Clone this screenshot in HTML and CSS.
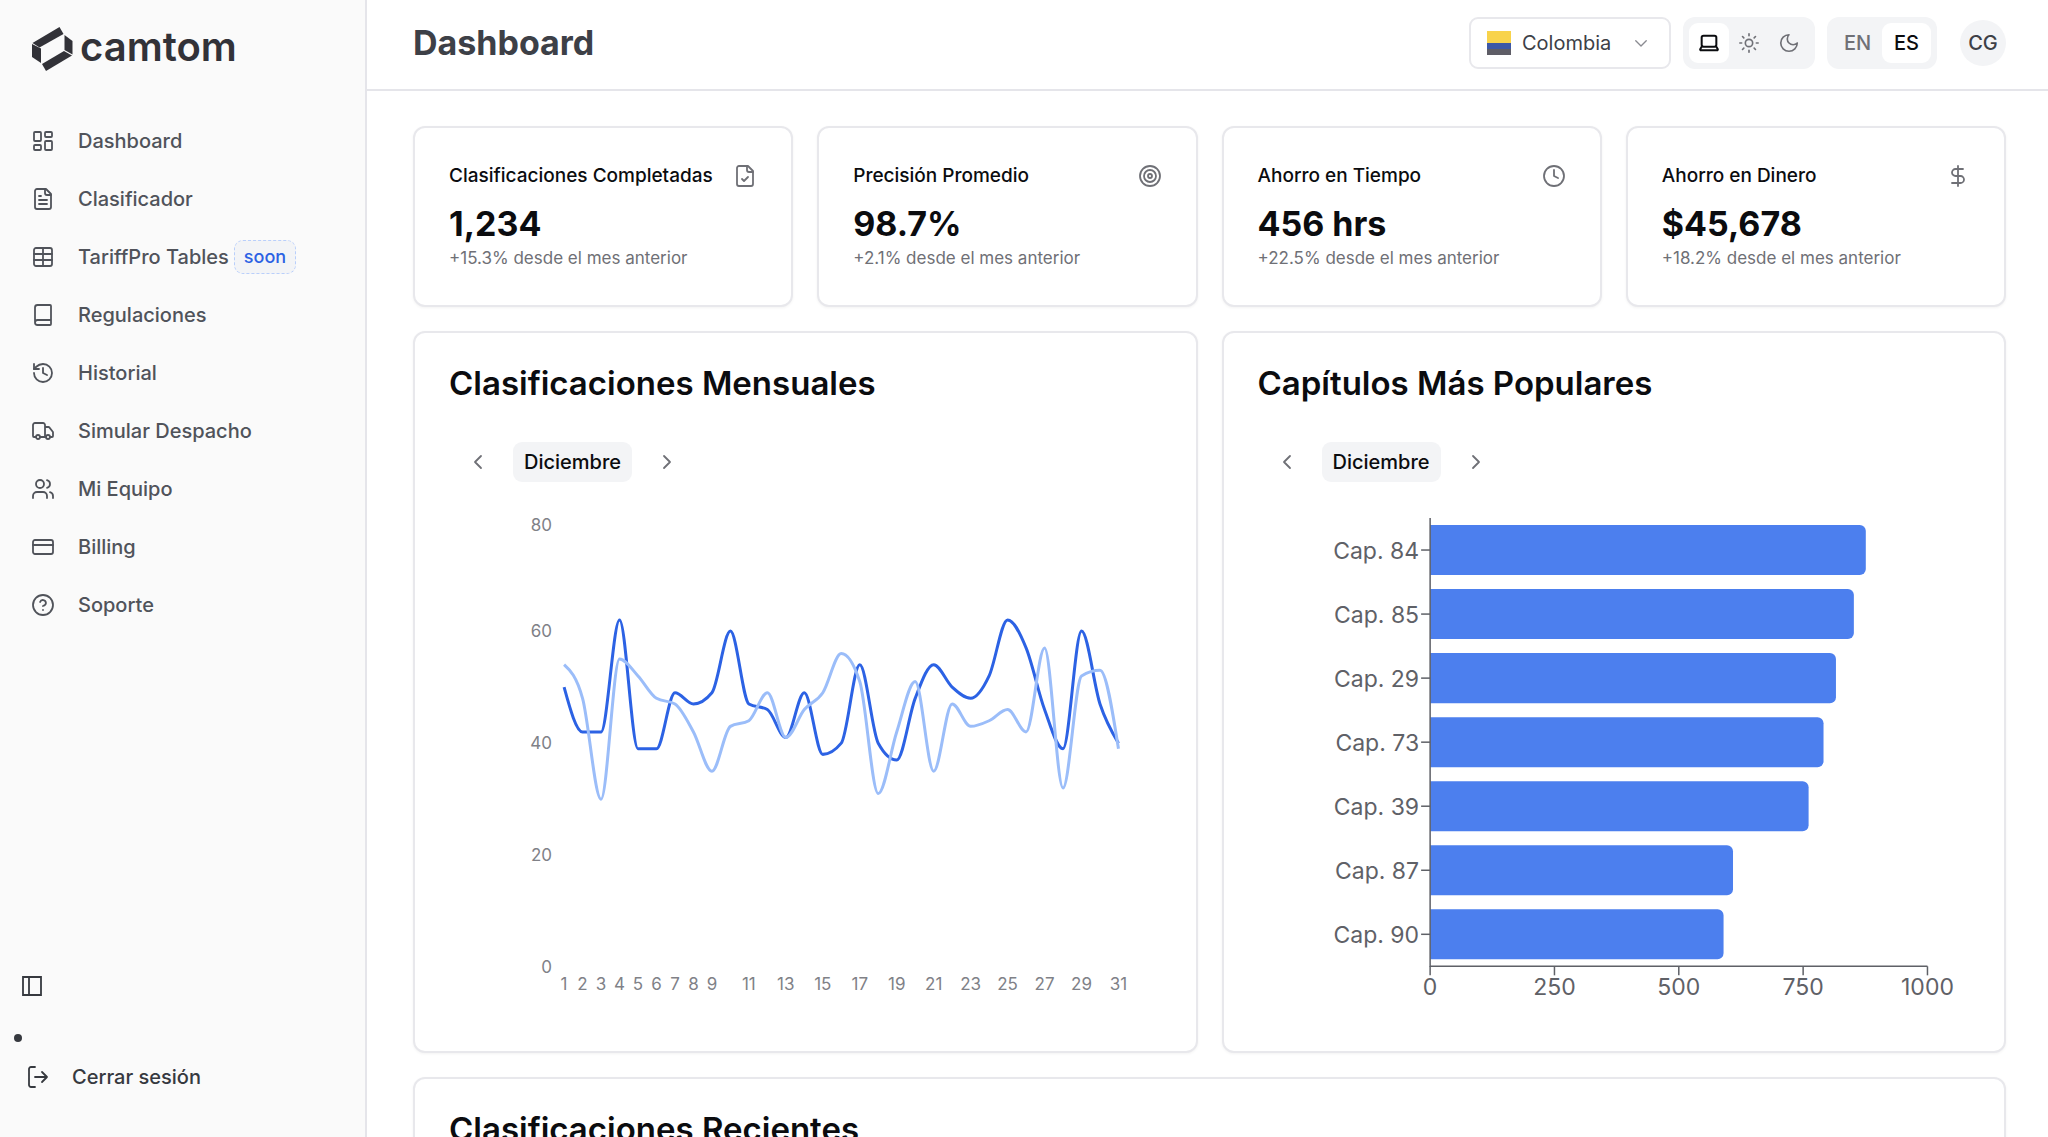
FILE: index.html
```html
<!DOCTYPE html>
<html lang="es">
<head>
<meta charset="utf-8">
<meta name="viewport" content="width=device-width, initial-scale=1">
<title>Dashboard - camtom</title>
<link rel="stylesheet" href="styles.css">
</head>
<body>
<div class="app">
  <aside class="sidebar">
    <a class="logo" href="#">
      <svg class="logo-mark" viewBox="0 0 41 44" aria-hidden="true">
        <path d="M27.500 0 31.500 7 7.500 20.500 0.500 16z"/>
        <path d="M0 17 9 21.500V36L0 30z"/>
        <path d="M32.500 8 40.500 14V27.500L32.500 23z"/>
        <path d="M32 24 40 28.500 14 44 10 37z"/>
      </svg>
      <span class="logo-text">camtom</span>
    </a>
    <nav class="nav" aria-label="Principal">
      <a class="nav-item" href="#"><svg class="icon" viewBox="0 0 24 24"><rect x="3" y="3" width="7" height="9" rx="1"/><rect x="14" y="3" width="7" height="5" rx="1"/><rect x="14" y="12" width="7" height="9" rx="1"/><rect x="3" y="16" width="7" height="5" rx="1"/></svg>Dashboard</a>
      <a class="nav-item" href="#"><svg class="icon" viewBox="0 0 24 24"><path d="M15 2H6a2 2 0 0 0-2 2v16a2 2 0 0 0 2 2h12a2 2 0 0 0 2-2V7Z"/><path d="M14 2v4a2 2 0 0 0 2 2h4M10 9H8M16 13H8M16 17H8"/></svg>Clasificador</a>
      <a class="nav-item" href="#"><svg class="icon" viewBox="0 0 24 24"><rect x="3" y="3" width="18" height="18" rx="2"/><path d="M12 3v18M3 9h18M3 15h18"/></svg><span class="nav-label">TariffPro Tables<span class="badge">soon</span></span></a>
      <a class="nav-item" href="#"><svg class="icon" viewBox="0 0 24 24"><path d="M4 19.500v-15A2.500 2.500 0 0 1 6.500 2H19a1 1 0 0 1 1 1v18a1 1 0 0 1-1 1H6.500a1 1 0 0 1 0-5H20"/></svg>Regulaciones</a>
      <a class="nav-item" href="#"><svg class="icon" viewBox="0 0 24 24"><path d="M3 12a9 9 0 1 0 9-9 9.750 9.750 0 0 0-6.740 2.740L3 8"/><path d="M3 3v5h5M12 7v5l4 2"/></svg>Historial</a>
      <a class="nav-item" href="#"><svg class="icon" viewBox="0 0 24 24"><path d="M14 18V6a2 2 0 0 0-2-2H4a2 2 0 0 0-2 2v11a1 1 0 0 0 1 1h2M15 18H9M19 18h2a1 1 0 0 0 1-1v-3.650a1 1 0 0 0-.22-.624l-3.480-4.350A1 1 0 0 0 17.520 8H14"/><circle cx="17" cy="18" r="2"/><circle cx="7" cy="18" r="2"/></svg>Simular Despacho</a>
      <a class="nav-item" href="#"><svg class="icon" viewBox="0 0 24 24"><path d="M16 21v-2a4 4 0 0 0-4-4H6a4 4 0 0 0-4 4v2"/><circle cx="9" cy="7" r="4"/><path d="M22 21v-2a4 4 0 0 0-3-3.870M16 3.130a4 4 0 0 1 0 7.750"/></svg>Mi Equipo</a>
      <a class="nav-item" href="#"><svg class="icon" viewBox="0 0 24 24"><rect x="2" y="5" width="20" height="14" rx="2"/><path d="M2 10h20"/></svg>Billing</a>
      <a class="nav-item" href="#"><svg class="icon" viewBox="0 0 24 24"><circle cx="12" cy="12" r="10"/><path d="M9.090 9a3 3 0 0 1 5.830 1c0 2-3 3-3 3M12 17h.01"/></svg>Soporte</a>
    </nav>
    <div class="sidebar-foot">
      <button class="collapse" type="button" aria-label="Contraer menú"><svg class="icon panel-icon" viewBox="0 0 24 24"><path d="M3 3h18v18H3zM9 3v18"/></svg></button>
      <span class="dot"></span>
      <a class="nav-item logout" href="#"><svg class="icon" viewBox="0 0 24 24"><path d="M10 22H6a2 2 0 0 1-2-2V4a2 2 0 0 1 2-2h4M17 17l5-5-5-5M22 12H10"/></svg>Cerrar sesión</a>
    </div>
  </aside>

  <div class="page">
    <header class="topbar">
      <h1 class="page-title">Dashboard</h1>
      <div class="tools">
        <label class="country">
          <span class="flag"></span>
          <select class="country-select" aria-label="País"><option>Colombia</option></select>
          <svg class="icon country-chevron" viewBox="0 0 24 24"><path d="m5 9 7 7 7-7"/></svg>
        </label>
        <div class="toggle" role="group" aria-label="Tema">
          <button class="toggle-btn active" type="button" aria-label="Sistema"><svg class="icon" viewBox="0 0 24 24"><rect x="4" y="4" width="16" height="12" rx="2"/><path d="M4 16l-1.500 2.500a1 1 0 0 0 1 1.500h17a1 1 0 0 0 1-1.500L20 16"/></svg></button>
          <button class="toggle-btn" type="button" aria-label="Claro"><svg class="icon" viewBox="0 0 24 24"><circle cx="12" cy="12" r="4"/><path d="M12 2v2M12 20v2M4.930 4.930l1.410 1.410M17.660 17.660l1.410 1.410M2 12h2M20 12h2M6.340 17.660l-1.410 1.410M19.070 4.930l-1.410 1.410"/></svg></button>
          <button class="toggle-btn" type="button" aria-label="Oscuro"><svg class="icon" viewBox="0 0 24 24"><path d="M12 3a6 6 0 0 0 9 9 9 9 0 1 1-9-9Z"/></svg></button>
        </div>
        <div class="toggle" role="group" aria-label="Idioma">
          <button class="toggle-btn lang" type="button">EN</button>
          <button class="toggle-btn lang active" type="button">ES</button>
        </div>
        <button class="avatar" type="button">CG</button>
      </div>
    </header>

    <main class="content">
      <section class="card stat">
        <div class="stat-head"><h2 class="stat-title">Clasificaciones Completadas</h2><svg class="icon" viewBox="0 0 24 24"><path d="M15 2H6a2 2 0 0 0-2 2v16a2 2 0 0 0 2 2h12a2 2 0 0 0 2-2V7Z"/><path d="M14 2v4a2 2 0 0 0 2 2h4M9 15l2 2 4-4"/></svg></div>
        <p class="stat-value">1,234</p>
        <p class="stat-note">+15.3% desde el mes anterior</p>
      </section>
      <section class="card stat">
        <div class="stat-head"><h2 class="stat-title">Precisión Promedio</h2><svg class="icon" viewBox="0 0 24 24"><circle cx="12" cy="12" r="10"/><circle cx="12" cy="12" r="6"/><circle cx="12" cy="12" r="2"/></svg></div>
        <p class="stat-value">98.7%</p>
        <p class="stat-note">+2.1% desde el mes anterior</p>
      </section>
      <section class="card stat">
        <div class="stat-head"><h2 class="stat-title">Ahorro en Tiempo</h2><svg class="icon" viewBox="0 0 24 24"><circle cx="12" cy="12" r="10"/><path d="M12 6v6l4 2"/></svg></div>
        <p class="stat-value">456 hrs</p>
        <p class="stat-note">+22.5% desde el mes anterior</p>
      </section>
      <section class="card stat">
        <div class="stat-head"><h2 class="stat-title">Ahorro en Dinero</h2><svg class="icon" viewBox="0 0 24 24"><path d="M12 2v20M17 5H9.500a3.500 3.500 0 0 0 0 7h5a3.500 3.500 0 0 1 0 7H6"/></svg></div>
        <p class="stat-value">$45,678</p>
        <p class="stat-note">+18.2% desde el mes anterior</p>
      </section>

      <section class="card half">
        <h2 class="card-title">Clasificaciones Mensuales</h2>
        <div class="months">
          <button class="month-step" type="button" aria-label="Mes anterior"><svg class="icon" viewBox="0 0 24 24"><path d="m15 18-6-6 6-6"/></svg></button>
          <button class="month" type="button">Diciembre</button>
          <button class="month-step" type="button" aria-label="Mes siguiente"><svg class="icon" viewBox="0 0 24 24"><path d="m9 18 6-6-6-6"/></svg></button>
        </div>
        <svg class="chart" id="line-chart" viewBox="0 0 712 515" role="img" aria-label="Clasificaciones por día"></svg>
      </section>
      <section class="card half">
        <h2 class="card-title">Capítulos Más Populares</h2>
        <div class="months">
          <button class="month-step" type="button" aria-label="Mes anterior"><svg class="icon" viewBox="0 0 24 24"><path d="m15 18-6-6 6-6"/></svg></button>
          <button class="month" type="button">Diciembre</button>
          <button class="month-step" type="button" aria-label="Mes siguiente"><svg class="icon" viewBox="0 0 24 24"><path d="m9 18 6-6-6-6"/></svg></button>
        </div>
        <svg class="chart" id="bar-chart" viewBox="0 0 712 515" role="img" aria-label="Capítulos más populares"></svg>
      </section>

      <section class="card full">
        <h2 class="card-title">Clasificaciones Recientes</h2>
      </section>
    </main>
  </div>
</div>
<script src="charts.js"></script>
</body>
</html>
```

FILE: styles.css
```css
* {
  box-sizing: border-box;
}

body {
  margin: 0;
  overflow: hidden;
  font-family: Inter, "Liberation Sans", sans-serif;
  font-size: 20px;
  color: #0b0c0f;
  background: #fff;
}

h1, h2, p {
  margin: 0;
}

a {
  color: inherit;
  text-decoration: none;
}

button, select {
  padding: 0;
  border: 0;
  background: none;
  font: inherit;
  color: inherit;
}

.icon {
  flex: none;
  width: 24px;
  height: 24px;
  fill: none;
  stroke: currentColor;
  stroke-width: 1.8;
  stroke-linecap: round;
  stroke-linejoin: round;
}

.app {
  display: grid;
  grid-template-columns: 367px minmax(0, 1fr);
  height: 100vh;
}

/* Sidebar */
.sidebar {
  display: flex;
  flex-direction: column;
  padding: 27px 0 31px;
  border-right: 2px solid #e5e5ea;
  background: #fafafa;
  color: #50535a;
}

.logo {
  display: flex;
  align-items: center;
  gap: 7px;
  height: 44px;
  padding-left: 32px;
  color: #323238;
}

.logo-mark {
  width: 41px;
  height: 44px;
  fill: currentColor;
}

.logo-text {
  padding-bottom: 4px;
  font-size: 40px;
  font-weight: 600;
  line-height: 40px;
}

.nav {
  margin-top: 41px;
}

.nav-item {
  display: flex;
  align-items: center;
  gap: 23px;
  height: 58px;
  padding-left: 31px;
  font-weight: 500;
}

.nav-label {
  display: flex;
  align-items: center;
  gap: 5px;
}

.badge {
  padding: 0 9px;
  border: 1px dashed #b9cffb;
  border-radius: 9px;
  background: #f3f4f6;
  color: #2c62e4;
  font-size: 18px;
  line-height: 32px;
}

.sidebar-foot {
  display: flex;
  flex-direction: column;
  align-items: flex-start;
  margin-top: auto;
  color: #36393f;
}

.collapse {
  display: flex;
  padding: 8px;
  margin-left: 12px;
}

.panel-icon {
  stroke-linecap: butt;
  stroke-linejoin: miter;
}

.dot {
  width: 8px;
  height: 8px;
  margin: 28px 0 6px 14px;
  border-radius: 50%;
  background: currentColor;
}

.logout {
  padding-left: 25px;
}

/* Top bar */
.page {
  display: flex;
  flex-direction: column;
  min-width: 0;
  min-height: 0;
}

.topbar {
  display: flex;
  flex: none;
  align-items: center;
  justify-content: space-between;
  height: 91px;
  padding: 0 42px 4px 46px;
  border-bottom: 2px solid #e5e5ea;
}

.page-title {
  font-size: 34px;
  font-weight: 700;
  color: #3d4047;
}

.tools {
  display: flex;
  align-items: center;
  gap: 12px;
}

.country {
  display: flex;
  align-items: center;
  gap: 11px;
  width: 202px;
  height: 52px;
  padding: 0 19px 0 16px;
  border: 2px solid #e8e8ec;
  border-radius: 9px;
  color: #3d4047;
}

.flag {
  flex: none;
  width: 24px;
  height: 24px;
  background: linear-gradient(#f8d34b 50%, #3d58a6 50% 75%, #5e5d66 75%);
}

.country-select {
  flex: 1;
  min-width: 0;
  appearance: none;
}

.country-chevron {
  width: 18px;
  height: 18px;
  color: #8a8b91;
}

.toggle {
  display: flex;
  height: 52px;
  padding: 6px;
  border-radius: 12px;
  background: #f3f4f6;
}

.toggle-btn {
  display: flex;
  align-items: center;
  justify-content: center;
  width: 40px;
  border-radius: 9px;
  color: #6f7076;
}

.toggle-btn .icon {
  width: 22px;
  height: 22px;
}

.toggle-btn.active {
  background: #fff;
  color: #0b0c0f;
}

.toggle-btn.active .icon {
  stroke-width: 2.2;
}

.lang {
  width: 49px;
  font-weight: 500;
}

.avatar {
  width: 46px;
  height: 46px;
  margin-left: 11px;
  border-radius: 50%;
  background: #f3f4f6;
  color: #3d4047;
  font-weight: 500;
}

/* Content */
.content {
  display: grid;
  flex: 1;
  grid-template-columns: repeat(4, minmax(0, 1fr));
  align-content: start;
  gap: 24px;
  min-height: 0;
  padding: 35px 42px 35px 46px;
  overflow-y: auto;
  scrollbar-width: none;
}

.card {
  padding: 34px;
  border: 2px solid #e8e8ec;
  border-radius: 12px;
  background: #fff;
  box-shadow: 0 1px 3px rgba(0, 0, 0, 0.05);
}

.half {
  grid-column: span 2;
}

.full {
  grid-column: 1 / -1;
  min-height: 300px;
}

.stat-head {
  display: flex;
  align-items: center;
  justify-content: space-between;
  height: 28px;
  margin-bottom: 12px;
  color: #6f7076;
}

.stat-title {
  font-size: 19px;
  font-weight: 500;
  line-height: 28px;
  white-space: nowrap;
  color: #0b0c0f;
}

.stat-value {
  font-size: 34px;
  font-weight: 700;
  line-height: 43px;
}

.stat-note {
  font-size: 17px;
  line-height: 26px;
  color: #6f7076;
}

.card-title {
  margin-bottom: 43px;
  font-size: 33px;
  font-weight: 600;
  line-height: 32px;
}

.months {
  display: flex;
  gap: 15px;
  height: 40px;
  margin: 0 0 20px 9px;
}

.month-step {
  display: flex;
  align-items: center;
  justify-content: center;
  width: 40px;
  color: #6f7076;
}

.month {
  padding: 0 11px;
  border-radius: 9px;
  background: #f3f4f6;
  font-weight: 500;
}

/* Charts */
.chart {
  display: block;
  width: 100%;
  overflow: visible;
}

.series {
  fill: none;
  stroke-width: 3;
}

.series-main {
  stroke: #2c62e4;
}

.series-prev {
  stroke: #9bbdf9;
}

.tick-small {
  font-size: 17px;
  fill: #808187;
}

.tick-large {
  font-size: 23px;
  fill: #5f6167;
}

.anchor-middle {
  text-anchor: middle;
}

.anchor-end {
  text-anchor: end;
}

.axis {
  fill: none;
  stroke: #5f6167;
  stroke-width: 1.5;
}

.bar {
  fill: #4c7fee;
}
```

FILE: charts.js
```js
const NS = "http://www.w3.org/2000/svg";

function add(parent, tag, attrs, text) {
  const el = document.createElementNS(NS, tag);
  for (const key in attrs) el.setAttribute(key, attrs[key]);
  if (text !== undefined) el.textContent = text;
  parent.appendChild(el);
}

// Monotone cubic interpolation: the curve never overshoots its points.
function monotonePath(pts) {
  const n = pts.length;
  const slope = [];
  for (let i = 0; i < n - 1; i++) {
    slope.push((pts[i + 1][1] - pts[i][1]) / (pts[i + 1][0] - pts[i][0]));
  }
  const t = new Array(n);
  for (let i = 1; i < n - 1; i++) {
    const a = slope[i - 1];
    const b = slope[i];
    t[i] = (Math.sign(a) + Math.sign(b)) * Math.min(Math.abs(a), Math.abs(b), Math.abs(a + b) / 4) || 0;
  }
  t[0] = (3 * slope[0] - t[1]) / 2;
  t[n - 1] = (3 * slope[n - 2] - t[n - 2]) / 2;
  let d = "M" + pts[0];
  for (let i = 0; i < n - 1; i++) {
    const h = (pts[i + 1][0] - pts[i][0]) / 3;
    d += "C" + [
      pts[i][0] + h, pts[i][1] + h * t[i],
      pts[i + 1][0] - h, pts[i + 1][1] - h * t[i + 1],
      pts[i + 1][0], pts[i + 1][1]
    ];
  }
  return d;
}

function drawLines() {
  const svg = document.getElementById("line-chart");
  const current = [50, 42, 42, 62, 39, 39, 49, 47, 49, 60, 47, 46, 41, 49, 38, 40, 54, 40, 37, 48, 54, 50, 48, 52, 62, 57, 46, 39, 60, 47, 40];
  const previous = [54, 48, 30, 55, 52, 48, 47, 42, 35, 43, 44, 49, 41, 46, 49, 56, 51, 31, 42, 51, 35, 47, 43, 44, 46, 42, 57, 32, 52, 53, 39];
  const x = day => 115 + (day - 1) * 554 / 30;
  const y = value => 465 - value * 5.6;
  const points = data => data.map((v, i) => [x(i + 1), y(v)]);

  add(svg, "path", { class: "series series-main", d: monotonePath(points(current)) });
  add(svg, "path", { class: "series series-prev", d: monotonePath(points(previous)) });

  [0, 20, 40, 60, 80].forEach(v => {
    add(svg, "text", { class: "tick-small anchor-end", x: 103, y: Math.max(y(v), 23) + 6 }, v);
  });
  for (let day = 1; day <= 31; day += day < 9 ? 1 : 2) {
    add(svg, "text", { class: "tick-small anchor-middle", x: x(day), y: 488 }, day);
  }
}

function drawBars() {
  const svg = document.getElementById("bar-chart");
  const data = [["84", 876], ["85", 852], ["29", 816], ["73", 791], ["39", 761], ["87", 609], ["90", 590]];
  const left = 172;
  const bottom = 464;
  const x = value => left + value * 0.497;

  data.forEach(([chapter, value], i) => {
    const mid = 48 + i * 64;
    const top = mid - 25;
    const w = x(value) - left;
    add(svg, "path", { class: "bar", d: `M${left} ${top}h${w - 6}a6 6 0 0 1 6 6v38a6 6 0 0 1-6 6h${6 - w}z` });
    add(svg, "path", { class: "axis", d: `M${left - 9} ${mid}h9` });
    add(svg, "text", { class: "tick-large anchor-end", x: left - 11, y: mid + 9 }, "Cap. " + chapter);
  });
  add(svg, "path", { class: "axis", d: `M${left} 16V${bottom}H${x(1000)}` });
  [0, 250, 500, 750, 1000].forEach(v => {
    add(svg, "path", { class: "axis", d: `M${x(v)} ${bottom}v9` });
    add(svg, "text", { class: "tick-large anchor-middle", x: x(v), y: 493 }, v);
  });
}

drawLines();
drawBars();
```
